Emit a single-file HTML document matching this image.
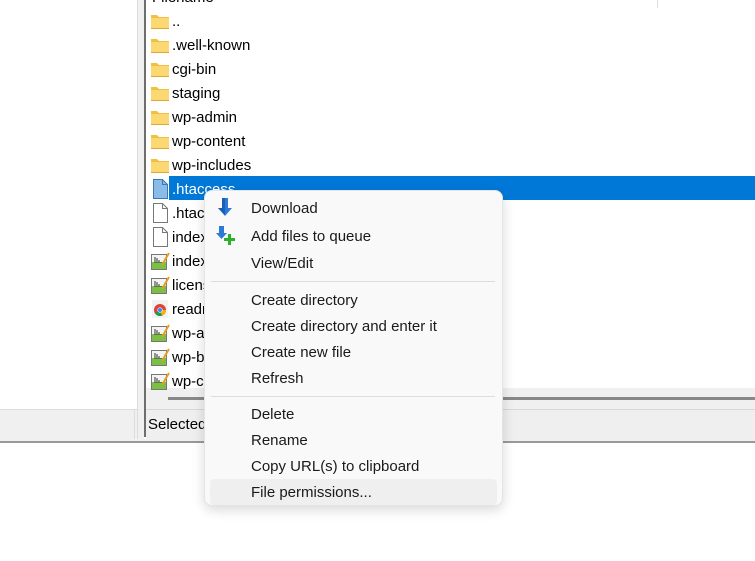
<!DOCTYPE html>
<html><head><style>
*{margin:0;padding:0;box-sizing:border-box}
body{width:755px;height:561px;background:#fff;position:relative;overflow:hidden;font-family:"Liberation Sans",sans-serif;font-size:14px;color:#000}
.a{position:absolute}
.row{position:absolute;left:150px;height:24px;width:605px}
.row .t{position:absolute;left:22px;top:4px;font-size:15px;line-height:17px}
.ic{position:absolute;left:0;top:3px}
.mi{position:absolute;left:46px;font-size:15px;line-height:18px;color:#1a1a1a}
</style></head><body>
<div class="a" style="left:0;top:0;width:138px;height:409px;background:#fff"></div>
<div class="a" style="left:137px;top:0;width:1px;height:440px;background:#ddd"></div>
<div class="a" style="left:138px;top:0;width:6px;height:440px;background:#f0f0f0"></div>
<div class="a" style="left:144px;top:0;width:2px;height:437px;background:#6e6e6e"></div>
<div class="a" style="left:0;top:409px;width:137px;height:30px;background:#f0f0f0;border-top:1px solid #ddd"></div>
<div class="a" style="left:134px;top:409px;width:1px;height:30px;background:#ddd"></div>
<div class="a" style="left:152px;top:-11px;font-size:15px">Filename</div>
<div class="a" style="left:146px;top:388px;width:609px;height:21px;background:#f0f0f0"></div>
<div class="a" style="left:168px;top:397px;width:587px;height:3px;background:#888"></div>
<div class="a" style="left:146px;top:409px;width:609px;height:30px;background:#efefef;border-top:1px solid #d8d8d8"></div>
<div class="a" style="left:148px;top:416px;font-size:15px">Selected</div>
<div class="a" style="left:0;top:439px;width:755px;height:2px;background:#f0f0f0"></div>
<div class="a" style="left:0;top:441px;width:755px;height:2px;background:#999"></div>
<div class="a" style="left:657px;top:0;width:1px;height:8px;background:#ddd"></div>
<div class="a" style="left:169px;top:176px;width:586px;height:24px;background:#0078d7"></div>

<div id="list"></div>
<script>
const rows=[["f",".."],["f",".well-known"],["f","cgi-bin"],["f","staging"],["f","wp-admin"],["f","wp-content"],["f","wp-includes"],["s",".htaccess"],["d",".htaccess.bk"],["d","index.html"],["p","index.php"],["p","license.txt"],["c","readme.html"],["p","wp-activate.php"],["p","wp-blog-header.php"],["p","wp-comments-post.php"]];
const folder='<svg class="ic" width="20" height="18" viewBox="0 0 20 18"><path d="M1 3h6l2 2h10v12H1z" fill="#f0c040"/><path d="M1 6h18v11H1z" fill="#fcd872"/><path d="M1 16h18v1H1z" fill="#e0a830"/></svg>';
const doc=(f,s)=>'<svg class="ic" width="20" height="20" viewBox="0 0 20 20" style="top:2px"><path d="M3.5 .5h9l5 5v14h-14z" fill="'+f+'" stroke="'+s+'"/><path d="M12.5 .5v5h5" fill="none" stroke="'+s+'"/></svg>';
const php='<svg class="ic" width="20" height="20" viewBox="0 0 20 20" style="top:2px"><rect x="1.5" y="3.5" width="15" height="15" fill="#7bc043" stroke="#777"/><rect x="2" y="4" width="14" height="7" fill="#f4f4f4"/><path d="M5 12V6M7 12V7M9 12V9M11 12v-1" stroke="#333"/><path d="M12 14L19 2" stroke="#e0a020" stroke-width="2"/></svg>';
const chrome='<svg class="ic" width="20" height="20" viewBox="0 0 20 20" style="top:2px"><rect x="2" y="1" width="16" height="18" fill="#f2f2f2"/><circle cx="10" cy="11" r="6" fill="#db4437"/><path d="M10 11L4.8 14A6 6 0 0 0 12 16.6z" fill="#0f9d58"/><path d="M10 11h6A6 6 0 0 1 12 16.6z" fill="#f4b400"/><circle cx="10" cy="11" r="2.6" fill="#fff"/><circle cx="10" cy="11" r="2" fill="#4285f4"/></svg>';
let h='';
rows.forEach((r,i)=>{
 const y=9+i*24;
 let ic=r[0]=='f'?folder:r[0]=='s'?doc('#8bbce8','#3a78b8'):r[0]=='d'?doc('#fff','#777'):r[0]=='p'?php:chrome;
 h+='<div class="row" style="top:'+y+'px">'+ic+'<div class="t" style="'+(r[0]=='s'?'color:#fff':'')+'">'+r[1]+'</div></div>';
});
document.getElementById('list').innerHTML=h;
</script>

<div class="a" style="left:204px;top:190px;width:299px;height:316px;background:#f9f9f9;border:1px solid #e4e4e4;border-radius:8px;box-shadow:0 4px 12px rgba(0,0,0,.15)">
 <svg class="a" style="left:12px;top:6px" width="16" height="20" viewBox="0 0 16 20"><path d="M5 1h6v10h4l-7 8-7-8h4z" fill="#2a7ad6"/><path d="M5 1h3v17l-7-7h4z" fill="#1a5fb4"/></svg>
 <svg class="a" style="left:10px;top:34px" width="22" height="22" viewBox="0 0 22 22"><path d="M4 1h5v7h3l-5.5 6L1 8h3z" fill="#2a7ad6"/><path d="M13 9h3v4h4v3h-4v4h-3v-4H9v-3h4z" fill="#2bb02b"/></svg>
 <div class="mi" style="top:9px">Download</div>
 <div class="mi" style="top:37px">Add files to queue</div>
 <div class="mi" style="top:64px">View/Edit</div>
 <div class="a" style="left:6px;top:90px;width:284px;height:1px;background:#ddd"></div>
 <div class="mi" style="top:101px">Create directory</div>
 <div class="mi" style="top:127px">Create directory and enter it</div>
 <div class="mi" style="top:153px">Create new file</div>
 <div class="mi" style="top:179px">Refresh</div>
 <div class="a" style="left:6px;top:205px;width:284px;height:1px;background:#ddd"></div>
 <div class="mi" style="top:215px">Delete</div>
 <div class="mi" style="top:241px">Rename</div>
 <div class="mi" style="top:267px">Copy URL(s) to clipboard</div>
 <div class="a" style="left:5px;top:288px;width:287px;height:26px;background:#efefef;border-radius:4px"></div>
 <div class="mi" style="top:293px">File permissions...</div>
</div>
</body></html>
